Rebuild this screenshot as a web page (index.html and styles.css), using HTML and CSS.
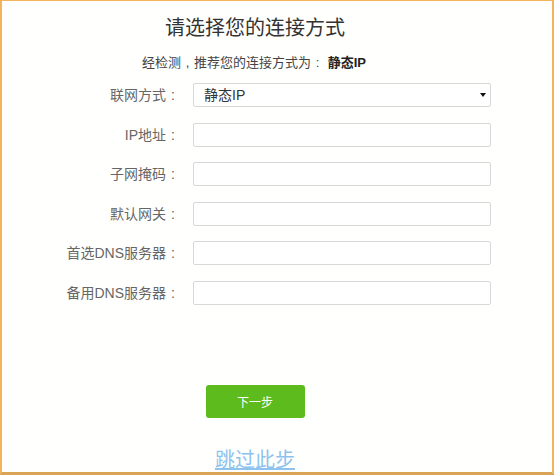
FILE: index.html
```html
<!DOCTYPE html>
<html lang="zh-CN">
<head>
<meta charset="UTF-8">
<title>连接方式</title>
<meta name="viewport" content="width=device-width,initial-scale=1">
<link rel="stylesheet" href="styles.css">
</head>
<body>
<div class="frame">
  <h1 class="title">请选择您的连接方式</h1>
  <p class="hint">经检测<i>,</i>推荐您的连接方式为<i>:</i> <b>静态IP</b></p>

  <!-- wan settings -->
  <form class="form">
    <label for="mode">联网方式<i>:</i></label>
    <div class="selbox">
      <select id="mode">
        <option>静态IP</option>
        <option>动态IP</option>
        <option>宽带拨号</option>
      </select>
    </div>

    <label for="ip">IP地址<i>:</i></label>
    <input id="ip">

    <label for="mask">子网掩码<i>:</i></label>
    <input id="mask">

    <label for="gw">默认网关<i>:</i></label>
    <input id="gw">

    <label for="dns1">首选DNS服务器<i>:</i></label>
    <input id="dns1">

    <label for="dns2">备用DNS服务器<i>:</i></label>
    <input id="dns2">
  </form>

  <div class="actions">
    <button class="next" type="button">下一步</button>
    <a class="skip" href="#">跳过此步</a>
  </div>
</div>
</body>
</html>
```

FILE: styles.css
```css
html,body{margin:0;height:100%}
body{background:#fff;color:#333;font-family:"Liberation Sans","Noto Sans CJK SC",sans-serif}
.frame{box-sizing:border-box;height:475px;background:#fffffd;
       border:2px solid #f2b55b;border-top-width:1px;border-bottom:3px solid #d9a456}
/* full-width punctuation, glyph centred in its cell */
i{display:inline-block;width:1em;text-align:center;font-style:normal}
.title{margin:0;padding:14px 44px 0 0;text-align:center;
       font-size:20px;line-height:26px;font-weight:normal;color:#333}
.hint{margin:13px 0 0;padding-right:46px;text-align:center;font-size:13px;line-height:18px;color:#444}
.hint b{color:#222}
/* label / field grid */
.form{display:grid;grid-template-columns:178px 298px;grid-auto-rows:24px;column-gap:13px;row-gap:15.6px;
      margin-top:11px;align-items:center}
.form label{height:24px;text-align:right;font-size:14px;line-height:24px;color:#666}
.form input,.form select{box-sizing:border-box;width:298px;height:24px;margin:0;
      border:1px solid #d8d8d8;border-radius:2px;background:#fff;font:inherit;font-size:14px;outline:none}
.selbox{position:relative;width:298px}
.form select{appearance:none;-webkit-appearance:none;padding:0 10px;color:#333}
.selbox::after{content:"";position:absolute;right:5px;top:10px;
      border-left:3px solid transparent;border-right:3px solid transparent;border-top:4px solid #111}
/* buttons */
.actions{display:flex;flex-direction:column;align-items:center;margin-top:80px;padding-right:44px}
.next{width:99px;height:33px;border:none;border-radius:3px;background:#5dbb1e;color:#fff;
      font:inherit;font-size:12px;cursor:pointer}
.skip{margin-top:30px;font-size:20px;line-height:24px;color:#8ec3ee;text-decoration:underline}
```
